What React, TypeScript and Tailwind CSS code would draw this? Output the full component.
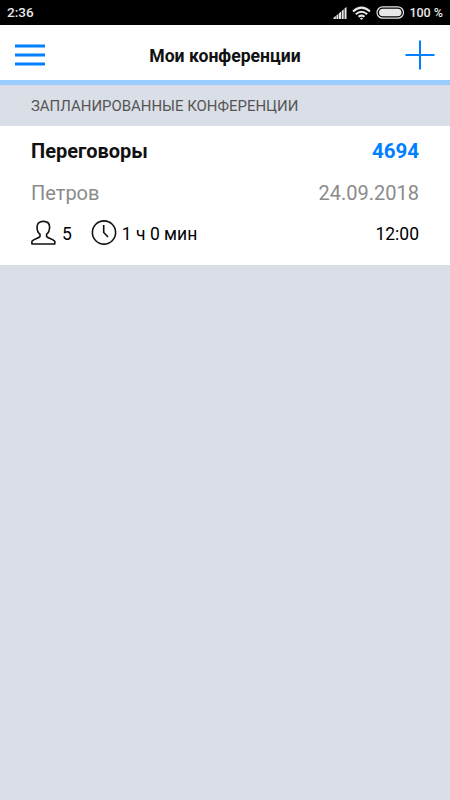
export default function App() {
  return (
    <div className="flex h-[800px] w-[450px] flex-col overflow-hidden bg-[#dadee6] font-['Roboto',sans-serif] text-black">
      <div className="flex h-[25px] shrink-0 items-center justify-between bg-black pl-[7px] pr-[7px] text-[#e8e8e8]">
        <span className="text-[13.5px] font-medium leading-[25px]">2:36</span>
        <div className="flex items-center">
          <svg width="14" height="14" viewBox="0 0 14 14" fill="#e8e8e8">
            <path d="M0.5 13V11.8L2.8 9.8V13ZM3.4 13V9.4L5.4 7.7V13ZM6 13V7.2L8 5.5V13ZM8.7 13V4.9L10.7 3.2V13ZM11.5 13V2.6L13.5 0.9V13Z" />
          </svg>
          <svg className="ml-[5px]" width="19" height="14" viewBox="0 0 19 14" fill="none" stroke="#e8e8e8" strokeWidth="2">
            <path d="M1 5.4Q9.5-2.2 18 5.4M3.8 8.2Q9.5 3.2 15.2 8.2M6.5 10.8Q9.5 8.4 12.5 10.8" /><path d="M7.8 12.2Q9.5 11.2 11.2 12.2L9.5 14Z" fill="#e8e8e8" stroke="none" />
          </svg>
          <svg className="ml-[5px]" width="29" height="13" viewBox="0 0 29 13" fill="none" stroke="#e8e8e8">
            <rect x="1" y="0.8" width="26.5" height="11.4" rx="5.7" strokeWidth="1.2" /><rect x="3" y="2.7" width="22.5" height="7.6" rx="3.8" fill="#e8e8e8" stroke="none" />
          </svg>
          <span className="ml-[4px] text-[12.5px] font-medium leading-[25px]">100 %</span>
        </div>
      </div>
      <header className="flex h-[55px] shrink-0 items-center justify-between bg-white px-[15px] pt-[5px]">
        <svg width="30" height="24" viewBox="0 0 30 24" stroke="#0080ff" strokeWidth="3.2"><path d="M0 3H30M0 12H30M0 21H30" /></svg>
        <h1 className="pt-[2px] text-[17.6px] font-bold text-[#111]">Мои конференции</h1>
        <svg width="30" height="30" viewBox="0 0 30 30" stroke="#0080ff" strokeWidth="2"><path d="M0.5 15H29.5M15 0.5V29.5" /></svg>
      </header>
      <div className="h-[5px] shrink-0 bg-[#99ccff]" />
      <h2 className="h-[41px] shrink-0 pl-[31px] text-[14.95px] leading-[43px] text-[#555]">ЗАПЛАНИРОВАННЫЕ КОНФЕРЕНЦИИ</h2>
      <main className="h-[139px] shrink-0 bg-white px-[31px]">
        <div className="flex h-[49px] items-center justify-between text-[20px] font-bold text-[#111]"><span>Переговоры</span><span className="pt-[2px] text-[20.5px] text-[#0080ff]">4694</span></div>
        <div className="flex h-[35px] items-center justify-between text-[20px] text-[#8b8b8b]"><span>Петров</span><span>24.09.2018</span></div>
        <div className="flex h-[46px] items-center text-[17.5px]">
          <svg width="25" height="26" viewBox="0 0 25 26" fill="none" stroke="#111" strokeWidth="1.6" strokeLinejoin="round"><path d="M9 16.5V14.2C6.8 12.5 6 9.5 6 7C6 3.5 8.3 1.4 12.3 1.4S18.6 3.5 18.6 7C18.6 9.5 17.8 12.5 15.6 14.2V16.5C17 18.5 21.5 18.5 23.8 21.2V24H0.9V21.2C3.2 18.5 7.6 18.5 9 16.5Z" /></svg>
          <span className="ml-[6px] pt-[2px]">5</span>
          <svg className="ml-[19px]" width="26" height="26" viewBox="0 0 26 26" fill="none" stroke="#111" strokeWidth="1.6"><circle cx="13" cy="12.5" r="11.6" /><path d="M12.7 5V12.5L17 17" /></svg>
          <span className="ml-[5px] pt-[2px]">1 ч 0 мин</span><span className="ml-auto pt-[2px]">12:00</span>
        </div>
      </main>
    </div>
  );
}
